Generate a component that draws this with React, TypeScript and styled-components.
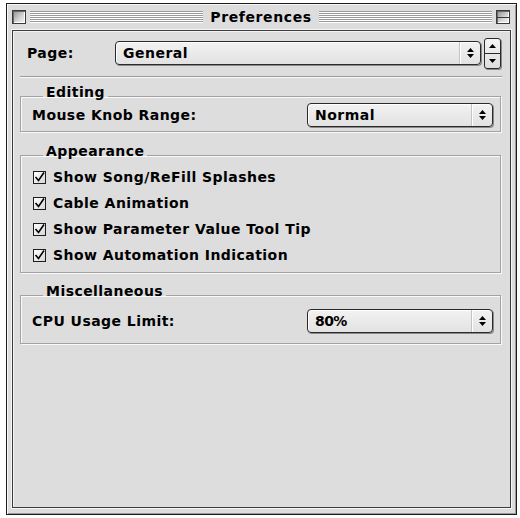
import React from 'react';
import styled, { createGlobalStyle } from 'styled-components';

const GlobalStyle = createGlobalStyle`
  body {
    margin: 0;
    background: #ffffff;
    font-family: "DejaVu Sans", "Noto Sans", sans-serif;
    color: #000;
  }
`;

const Window = styled.div`
  box-sizing: border-box;
  margin: 3px 0 0 6px;
  width: 511px;
  height: 512px;
  border: 1px solid #1c1c1c;
  background: #dddddd;
  box-shadow: inset 1px 1px 0 #f8f8f8, inset -1px -1px 0 #9a9a9a;
  display: flex;
  flex-direction: column;
`;

const TitleBar = styled.div`
  height: 26px;
  display: flex;
  align-items: center;
  gap: 4px;
  padding: 0 6px 0 5px;
`;

const TitleBox = styled.div`
  box-sizing: border-box;
  width: 14px;
  height: 14px;
  border: 1px solid #3a3a3a;
  background: linear-gradient(135deg, #8e8e8e 0%, #d8d8d8 60%, #f4f4f4 100%);
  box-shadow: inset 1px 1px 0 #6a6a6a, inset -1px -1px 0 #ffffff;
  display: flex;
  align-items: center;
`;

const ShadeLine = styled.div`
  flex: 1;
  height: 1px;
  background: #3a3a3a;
  margin-top: 1px;
`;

const Stripes = styled.div`
  flex: 1;
  height: 12px;
  background: repeating-linear-gradient(
    to bottom,
    #9a9a9a 0px,
    #9a9a9a 1px,
    #ffffff 1px,
    #ffffff 2px
  );
`;

const Title = styled.div`
  font-size: 14px;
  font-weight: bold;
  letter-spacing: 0.6px;
  padding: 0 3px;
  line-height: 16px;
`;

const Panel = styled.div`
  flex: 1;
  margin: 0 5px 6px 5px;
  border: 1px solid #3c3c3c;
  box-shadow: 0 0 0 1px #f6f6f6, inset 1px 1px 0 #f2f2f2;
  padding: 0 8px 0 7px;
  display: flex;
  flex-direction: column;
`;

const PageRow = styled.div`
  height: 32px;
  margin-top: 6px;
  display: flex;
  align-items: center;
`;

const Label = styled.div<{ $width?: number }>`
  font-size: 14px;
  font-weight: bold;
  letter-spacing: 0.45px;
  white-space: nowrap;
  ${(p) => (p.$width ? `width: ${p.$width}px; padding-left: 7px; box-sizing: border-box;` : '')}
`;

const Separator = styled.div`
  margin-top: 7px;
  border-top: 1px solid #9c9c9c;
  border-bottom: 1px solid #fafafa;
`;

const Group = styled.fieldset<{ $gap: number; $bottom: number }>`
  margin: ${(p) => p.$gap}px 1px 0 0;
  padding: 0 7px ${(p) => p.$bottom}px 11px;
  border: 1px solid #a2a2a2;
  box-shadow: 1px 1px 0 #fafafa, inset 1px 1px 0 #fafafa;
  min-width: 0;
`;

const Legend = styled.legend`
  font-size: 14px;
  font-weight: bold;
  letter-spacing: 0.45px;
  line-height: 16px;
  padding: 0 3px 8px 3px;
  margin: 0 0 -8px 11px;
`;

const Row = styled.div<{ $top: number }>`
  margin-top: ${(p) => p.$top}px;
  display: flex;
  align-items: center;
  justify-content: space-between;
`;

const Popup = styled.div<{ $width: number }>`
  box-sizing: border-box;
  width: ${(p) => p.$width}px;
  height: 24px;
  border: 1px solid #2a2a2a;
  border-radius: 4px;
  background: linear-gradient(to bottom, #f2f2f2, #e2e2e2);
  box-shadow: 1px 1px 0 #8a8a8a, inset 1px 1px 0 #ffffff;
  display: flex;
  align-items: stretch;
`;

const PopupText = styled.div<{ $light?: boolean }>`
  flex: 1;
  display: flex;
  align-items: center;
  padding-left: 7px;
  font-size: 14px;
  font-weight: bold;
  letter-spacing: ${(p) => (p.$light ? '-0.6px' : '0.5px')};
`;

const PopupArrows = styled.div`
  width: 20px;
  border-left: 1px solid #c4c4c4;
  box-shadow: inset 1px 0 0 #ffffff;
  display: flex;
  align-items: center;
  justify-content: center;
`;

const Stepper = styled.div`
  box-sizing: border-box;
  margin-left: 3px;
  width: 17px;
  height: 31px;
  border: 1px solid #2a2a2a;
  border-radius: 3px;
  background: linear-gradient(to bottom, #f4f4f4, #dedede);
  box-shadow: 1px 1px 0 #8a8a8a;
  display: flex;
  flex-direction: column;
`;

const StepHalf = styled.div<{ $down?: boolean }>`
  flex: 1;
  display: flex;
  align-items: center;
  justify-content: center;
  ${(p) => (p.$down ? 'border-top: 1px solid #2a2a2a;' : '')}
`;

const CheckList = styled.div`
  margin-top: 5px;
`;

const CheckRow = styled.div`
  height: 26px;
  display: flex;
  align-items: center;
  gap: 7px;
  padding-left: 1px;
`;

const CheckBox = styled.div`
  box-sizing: border-box;
  width: 13px;
  height: 13px;
  border: 1px solid #1e1e1e;
  background: linear-gradient(135deg, #ffffff, #d6d6d6);
  display: flex;
  align-items: center;
  justify-content: center;
`;

const DoubleArrow = () => (
  <svg width="9" height="12" viewBox="0 0 9 12">
    <path d="M4.5 1 L8 5 L1 5 Z" fill="#000" />
    <path d="M4.5 11 L8 7 L1 7 Z" fill="#000" />
  </svg>
);

const Tri = ({ down }: { down?: boolean }) => (
  <svg width="9" height="6" viewBox="0 0 9 6">
    <path d={down ? 'M1 1 L8 1 L4.5 5 Z' : 'M4.5 1 L8 5 L1 5 Z'} fill="#000" />
  </svg>
);

const Check = () => (
  <svg width="11" height="11" viewBox="0 0 11 11">
    <path d="M1.5 5 L4.5 8.5 L10 0.5" stroke="#000" strokeWidth="1.6" fill="none" />
  </svg>
);

const Select: React.FC<{ value: string; width: number; light?: boolean }> = ({ value, width, light }) => (
  <Popup $width={width}>
    <PopupText $light={light}>{value}</PopupText>
    <PopupArrows>
      <DoubleArrow />
    </PopupArrows>
  </Popup>
);

const options = [
  'Show Song/ReFill Splashes',
  'Cable Animation',
  'Show Parameter Value Tool Tip',
  'Show Automation Indication',
];

const App: React.FC = () => {
  return (
    <>
      <GlobalStyle />
      <Window>
        <TitleBar>
          <TitleBox />
          <Stripes />
          <Title>Preferences</Title>
          <Stripes />
          <TitleBox>
            <ShadeLine />
          </TitleBox>
        </TitleBar>
        <Panel>
          <PageRow>
            <Label $width={95}>Page:</Label>
            <Select value="General" width={366} />
            <Stepper>
              <StepHalf>
                <Tri />
              </StepHalf>
              <StepHalf $down>
                <Tri down />
              </StepHalf>
            </Stepper>
          </PageRow>
          <Separator />
          <Group $gap={6} $bottom={4}>
            <Legend>Editing</Legend>
            <Row $top={3}>
              <Label>Mouse Knob Range:</Label>
              <Select value="Normal" width={186} />
            </Row>
          </Group>
          <Group $gap={11} $bottom={4}>
            <Legend>Appearance</Legend>
            <CheckList>
              {options.map((o) => (
                <CheckRow key={o}>
                  <CheckBox>
                    <Check />
                  </CheckBox>
                  <Label>{o}</Label>
                </CheckRow>
              ))}
            </CheckList>
          </Group>
          <Group $gap={10} $bottom={10}>
            <Legend>Miscellaneous</Legend>
            <Row $top={10}>
              <Label>CPU Usage Limit:</Label>
              <Select value="80%" width={186} light />
            </Row>
          </Group>
        </Panel>
      </Window>
    </>
  );
};

export default App;
